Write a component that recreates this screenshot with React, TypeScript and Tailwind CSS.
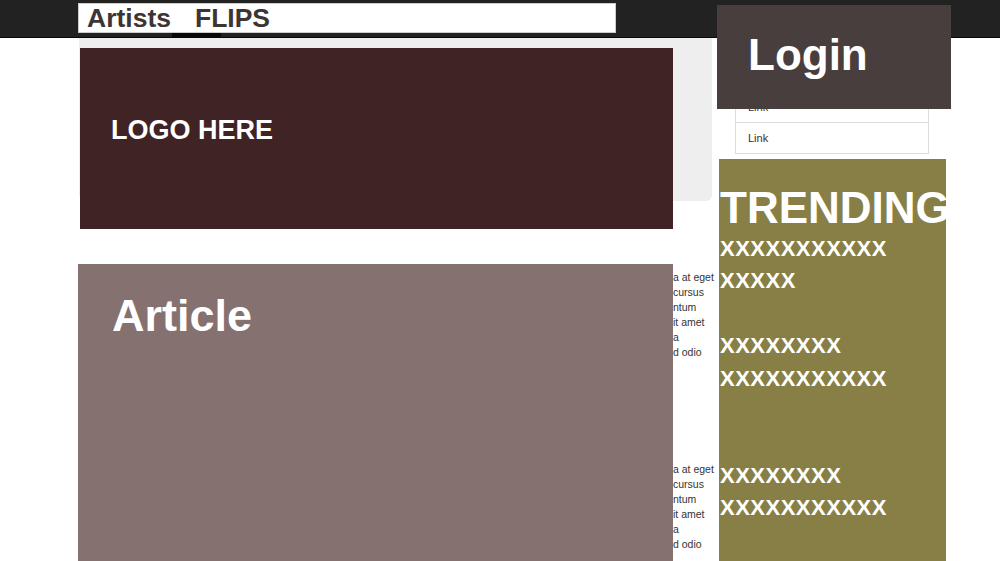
const lines = ["a at eget", "cursus", "ntum", "it amet", "a", "d odio"];

function Snippet() {
  return (
    <div className="pl-[172px] text-[10.5px] leading-[15px] text-[#333]">
      {lines.map((l, i) => (
        <p key={i} className="whitespace-nowrap">
          {l}
        </p>
      ))}
    </div>
  );
}

export default function App() {
  return (
    <div className="relative h-[561px] overflow-hidden bg-white font-['Liberation_Sans',Arial,sans-serif]">
      {/* Navbar */}
      <nav className="flex h-[38px] border-b border-[#080808] bg-[#222]">
        <div className="ml-[172px] mt-[30px] h-[7px] w-[49px] bg-[#080808]" />
      </nav>

      {/* Page under the blocks */}
      <div className="flex pl-[79px]">
        <main className="w-[633px]">
          <div className="h-[163px] rounded-b-md bg-[#eee]" />
          <div className="grid grid-cols-3">
            <div />
            <div />
            <div className="pt-[69px]">
              <Snippet />
              <div className="h-[102px]" />
              <Snippet />
            </div>
          </div>
        </main>
        <aside className="ml-[23px] mt-[22px] w-[194px]">
          <ul className="border-b border-[#ddd] text-[11px] text-[#333]">
            {["Link", "Link", "Link"].map((l, i) => (
              <li
                key={i}
                className="flex h-[31px] items-center border-x border-t border-[#ddd] px-3"
              >
                {l}
              </li>
            ))}
          </ul>
        </aside>
      </div>

      {/* Brand / search box */}
      <div className="absolute left-[78px] top-[3px] flex h-[30px] w-[538px] items-center gap-[24px] border border-[#ccc] bg-white pl-[8px] text-[26.5px] font-bold leading-[30px] text-[#3d3535]">
        <span>Artists</span>
        <span>FLIPS</span>
      </div>

      {/* Login */}
      <div className="absolute left-[717px] top-[5px] h-[104px] w-[234px] bg-[#483e3d] pl-[31px] pt-[28px] text-[44px] font-bold leading-none text-white">
        Login
      </div>

      {/* Logo */}
      <div className="absolute left-[80px] top-[48px] h-[181px] w-[593px] bg-[#3f2325] pl-[31px] pt-[69px] text-[27px] font-bold leading-none text-white">
        LOGO HERE
      </div>

      {/* Article */}
      <div className="absolute left-[78px] top-[264px] h-[297px] w-[595px] bg-[#857170] pl-[34px] pt-[29px] text-[45px] font-bold leading-none text-white">
        Article
      </div>

      {/* Trending */}
      <div className="absolute left-[719px] top-[159px] h-[402px] w-[227px] bg-[#877f45] pl-[1px] pt-[27px] text-white">
        <h2 className="whitespace-nowrap text-[44px] font-bold leading-none">TRENDING</h2>
        <p className="mt-[3px] text-[22px] font-bold leading-[32.4px] tracking-[0.5px]">
          XXXXXXXXXXX
          <br />
          XXXXX
          <br />
          <br />
          XXXXXXXX
          <br />
          XXXXXXXXXXX
          <br />
          <br />
          <br />
          XXXXXXXX
          <br />
          XXXXXXXXXXX
        </p>
      </div>
    </div>
  );
}
